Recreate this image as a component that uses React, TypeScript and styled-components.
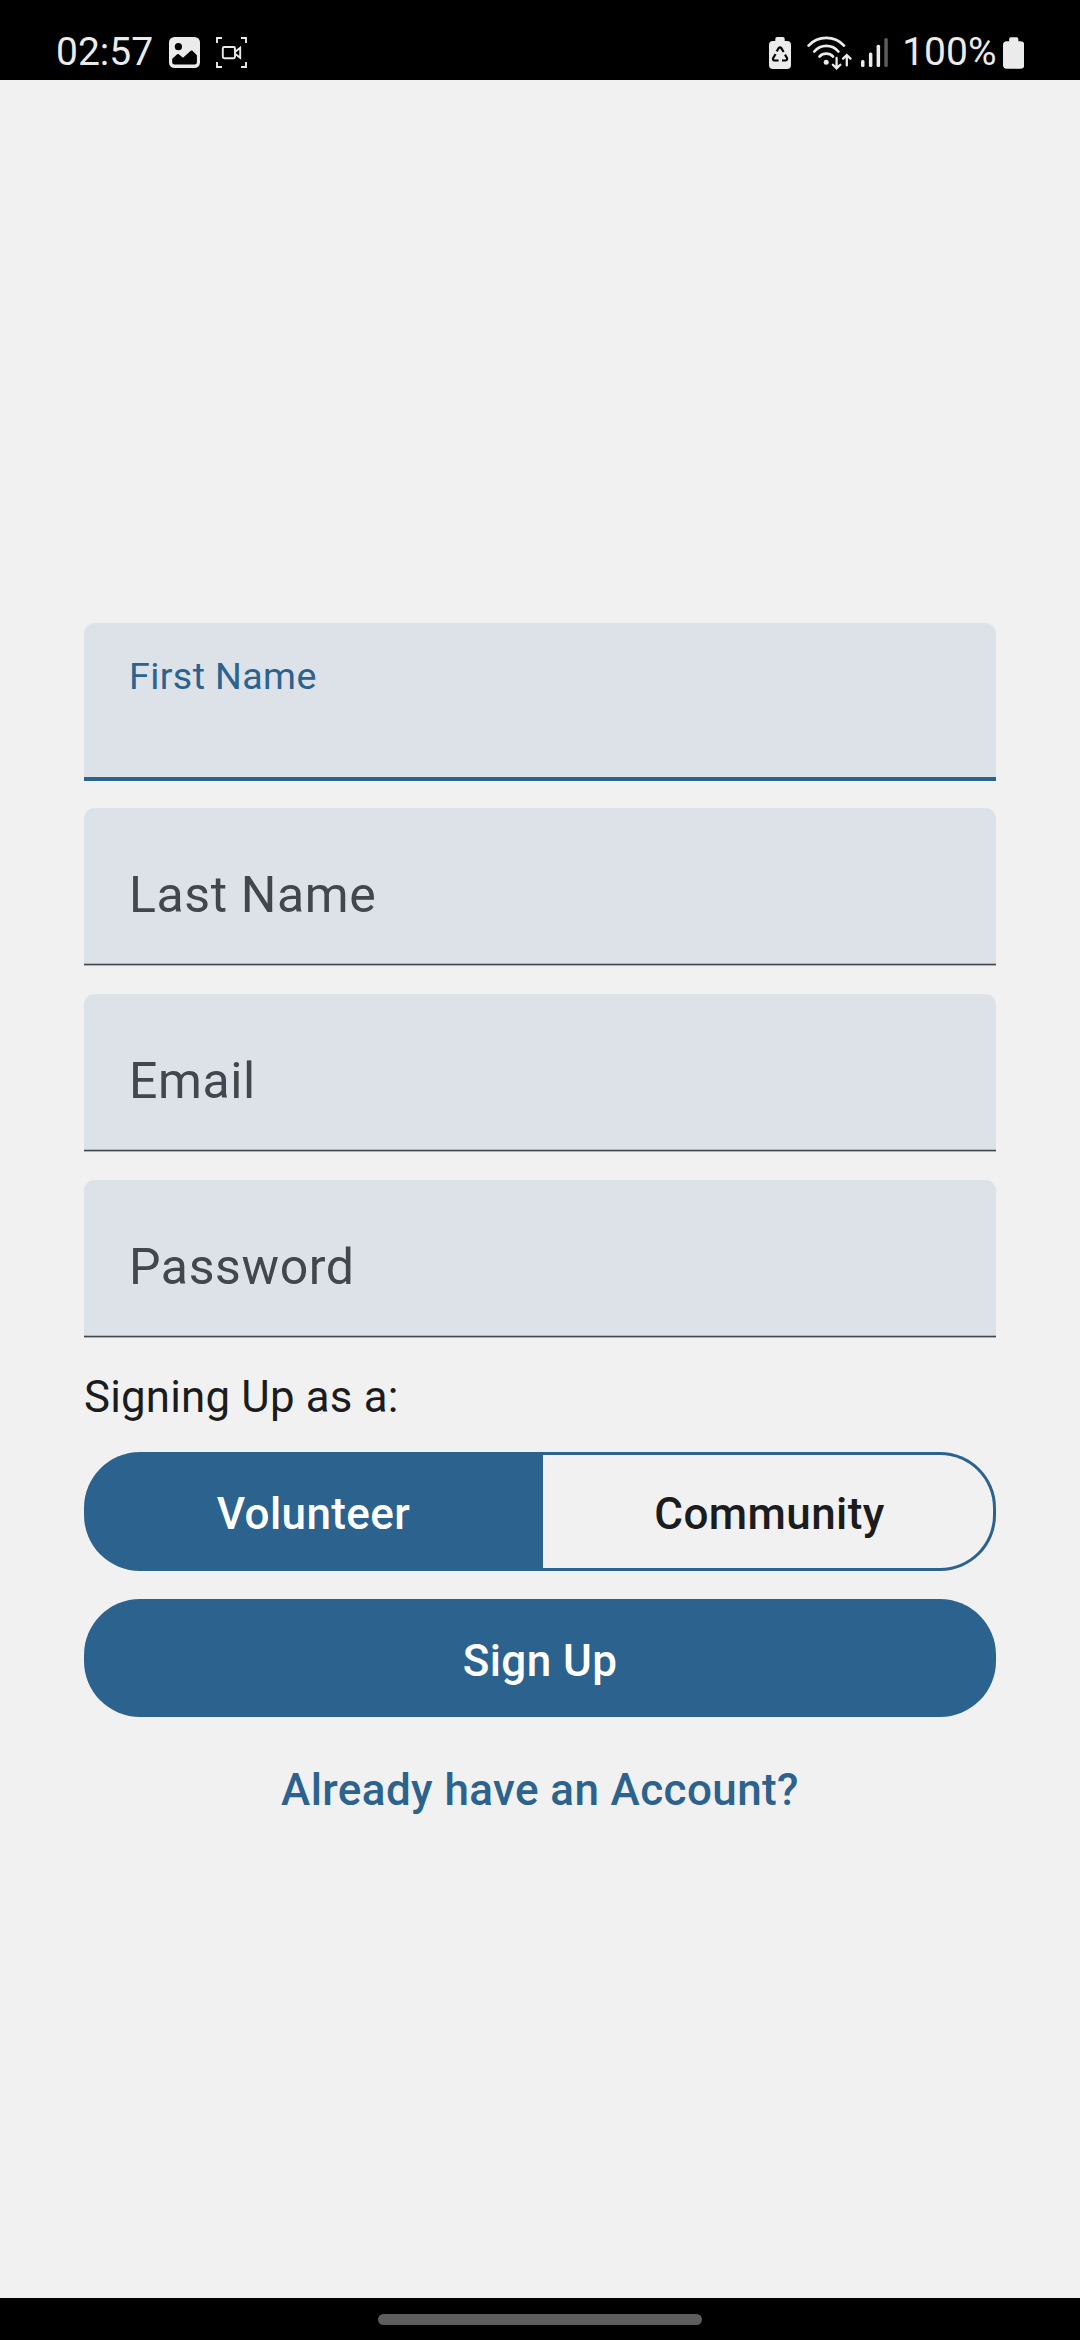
import React from "react";
import styled, { createGlobalStyle } from "styled-components";

const GlobalStyle = createGlobalStyle`
  *, *::before, *::after { box-sizing: border-box; }
  body { margin: 0; background: #f1f1f1; font-family: Roboto, "Noto Sans", sans-serif; }
  button { font-family: inherit; border: 0; margin: 0; }
`;

const Screen = styled.div`
  width: 1080px;
  height: 2340px;
  display: flex;
  flex-direction: column;
  background: #f1f1f1;
`;

const StatusBar = styled.header`
  height: 80px;
  flex: none;
  display: flex;
  justify-content: space-between;
  padding: 30px 56px 0 56px;
  background: #000;
  color: #ebebeb;
`;

const StatusGroup = styled.div`
  display: flex;
  align-items: center;
  height: 44px;
`;

const StatusText = styled.span<{ $gap?: number }>`
  margin-left: ${(p) => p.$gap ?? 0}px;
  font-size: 39px;
  line-height: 44px;
`;

const Glyph = styled.svg<{ $gap: number }>`
  display: block;
  flex: none;
  margin-top: 1px;
  margin-left: ${(p) => p.$gap}px;
`;

const Main = styled.main`
  flex: 1;
  display: flex;
  flex-direction: column;
  padding: 543px 84px 0;
`;

const Fields = styled.div`
  display: flex;
  flex-direction: column;
  gap: 28px;
`;

const Field = styled.label<{ $active?: boolean }>`
  height: 158px;
  margin-bottom: ${(p) => (p.$active ? "-1px" : "0")};
  padding: ${(p) => (p.$active ? "31px" : "57px")} 45px 0;
  border-radius: 11px 11px 0 0;
  background: ${(p) =>
    p.$active
      ? "linear-gradient(#2b638e, #2b638e) bottom / 100% 4px no-repeat, #dde2e9"
      : "linear-gradient(#b0b7bd 1px, #42474c 1px 2px, #adb1b4 2px) bottom / 100% 3px no-repeat, #dde2e9"};
`;

const FieldLabel = styled.span<{ $active?: boolean }>`
  display: block;
  color: ${(p) => (p.$active ? "#2b638e" : "#42474c")};
  font-size: ${(p) => (p.$active ? "37.6px" : "50px")};
  line-height: ${(p) => (p.$active ? "44px" : "60px")};
  letter-spacing: ${(p) => (p.$active ? "0.4px" : "0.6px")};
`;

const Prompt = styled.p`
  margin: 29px 0 25px;
  color: #1b1c1e;
  font-size: 43.8px;
  line-height: 60px;
  letter-spacing: 0.2px;
`;

const Segments = styled.div`
  display: grid;
  grid-template-columns: 459px 1fr;
  height: 119px;
`;

const ButtonLabel = styled.button`
  font-size: 44px;
  font-weight: 500;
  line-height: 60px;
  letter-spacing: 0.4px;
  padding: 5px 0 0;
`;

const VolunteerSegment = styled(ButtonLabel)`
  background: #2b638e;
  color: #fff;
  border-radius: 56px 0 0 56px;
`;

const CommunitySegment = styled(ButtonLabel)`
  padding-left: 3px;
  background: #f1f1f1;
  color: #1b1c1e;
  border: 3px solid #2b638e;
  border-left-width: 0;
  border-radius: 0 56px 56px 0;
`;

const Submit = styled(ButtonLabel)`
  height: 118px;
  margin-top: 28px;
  border-radius: 56px;
  background: #2b638e;
  color: #fff;
`;

const AccountLink = styled(ButtonLabel)`
  align-self: center;
  margin-top: 43px;
  padding: 0;
  background: none;
  color: #2b638e;
`;

const NavBar = styled.footer`
  height: 42px;
  flex: none;
  display: flex;
  justify-content: center;
  padding-top: 16px;
  background: #000;
`;

const Handle = styled.div`
  width: 324px;
  height: 11px;
  border-radius: 6px;
  background: #5e5e5e;
`;

const ImageIcon = () => (
  <Glyph $gap={16} width="31" height="31" viewBox="0 0 31 31">
    <rect width="31" height="31" rx="5.5" fill="#ebebeb" />
    <circle cx="9.4" cy="9.7" r="3.6" fill="#000" />
    <path d="M3.2 21.8 8.2 17.3Q9 16.7 9.8 17.3L14 20.8 21.8 13.8Q22.7 13.1 23.5 13.8L27.9 18.2V25.2Q27.9 27.5 25.6 27.5H5.5Q3.2 27.5 3.2 25.2z" fill="#000" />
  </Glyph>
);

const RecordIcon = () => (
  <Glyph $gap={16} width="31" height="31" viewBox="0 0 31 31" fill="none" stroke="#ebebeb" strokeWidth="1.9">
    <path d="M1 6V1H6M25 1H30V6M1 25V30H6M25 30H30V25" />
    <rect x="6.8" y="10" width="12.2" height="11.2" rx="1.4" />
    <path d="M19.3 14.8 24.2 10.8V20.8L19.3 17" />
  </Glyph>
);

const BatteryShape = () => (
  <path d="M8 0H14Q15.7 0 15.7 1.8V4H18Q22 4 22 8V28Q22 32 18 32H4Q0 32 0 28V8Q0 4 4 4H6.3V1.8Q6.3 0 8 0Z" fill="#ebebeb" />
);

const BatteryProtectIcon = () => (
  <Glyph $gap={0} width="22" height="32" viewBox="0 0 22 32">
    <BatteryShape />
    <g fill="none" stroke="#000" strokeWidth="2.2" strokeLinejoin="round">
      <path d="M7.6 14.4 9.7 11.1Q11 9.7 12.3 11.1L14.6 15" />
      <path d="M16 17.6 18 21Q18.6 23.3 16.4 23.5H13" />
      <path d="M9.6 23.5H5.6Q3.4 23.1 4.2 21L6.6 17" />
    </g>
  </Glyph>
);

const WifiIcon = () => (
  <Glyph $gap={15.5} width="45" height="35" viewBox="0 0 45 35" fill="none" stroke="#ebebeb" strokeWidth="2.7" strokeLinecap="round">
    <path d="M1.6 10.6A24.3 24.3 0 0 1 37 10.6" />
    <path d="M7.3 16.5A15.7 15.7 0 0 1 31.4 16.5" />
    <path d="M12.5 21.5A9.3 9.3 0 0 1 26 21.5" />
    <circle cx="19.2" cy="27.2" r="2.5" fill="#ebebeb" stroke="none" />
    <path d="M29.6 23V33M25.9 29.8 29.6 33.4 33.3 29.8M39.8 30.4V20M36.1 23.6 39.8 20 43.5 23.6" strokeWidth="2.3" />
  </Glyph>
);

const SignalIcon = () => (
  <Glyph $gap={9.5} width="27" height="29" viewBox="0 0 27 29" fill="#ebebeb">
    <rect x="0" y="22" width="3.5" height="7" rx="1.5" />
    <rect x="7.9" y="14.6" width="3.5" height="14.4" rx="1.5" />
    <rect x="15.6" y="6.8" width="3.5" height="22.2" rx="1.5" />
    <rect x="23.3" y="0" width="3.5" height="29" rx="1.5" fill="#5b5b5b" />
  </Glyph>
);

const BatteryIcon = () => (
  <Glyph $gap={6} width="21.5" height="32" viewBox="0 0 22 32">
    <BatteryShape />
  </Glyph>
);

export default function App() {
  return (
    <>
      <GlobalStyle />
      <Screen>
        <StatusBar>
          <StatusGroup>
            <StatusText>02:57</StatusText>
            <ImageIcon />
            <RecordIcon />
          </StatusGroup>
          <StatusGroup>
            <BatteryProtectIcon />
            <WifiIcon />
            <SignalIcon />
            <StatusText $gap={14}>100%</StatusText>
            <BatteryIcon />
          </StatusGroup>
        </StatusBar>
        <Main>
          <Fields>
            <Field $active>
              <FieldLabel $active>First Name</FieldLabel>
            </Field>
            {["Last Name", "Email", "Password"].map((name) => (
              <Field key={name}>
                <FieldLabel>{name}</FieldLabel>
              </Field>
            ))}
          </Fields>
          <Prompt>Signing Up as a:</Prompt>
          <Segments>
            <VolunteerSegment>Volunteer</VolunteerSegment>
            <CommunitySegment>Community</CommunitySegment>
          </Segments>
          <Submit>Sign Up</Submit>
          <AccountLink>Already have an Account?</AccountLink>
        </Main>
        <NavBar>
          <Handle />
        </NavBar>
      </Screen>
    </>
  );
}
